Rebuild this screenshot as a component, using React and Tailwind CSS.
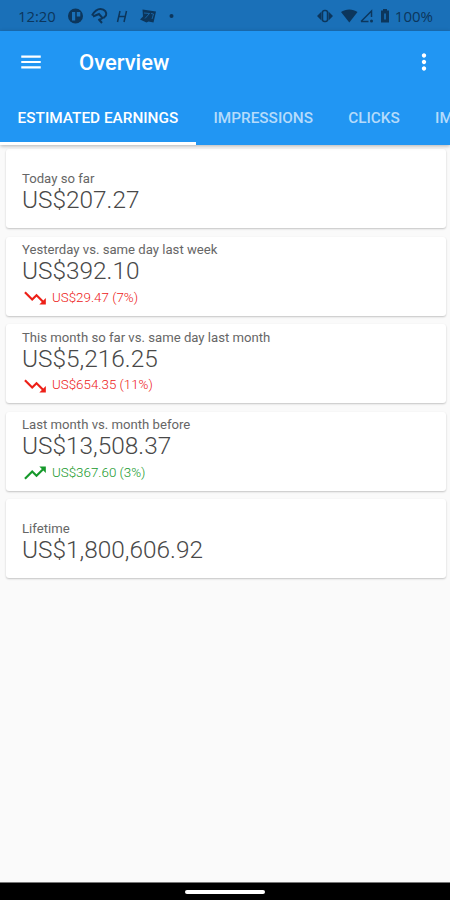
import React, { useState } from 'react';
import { MdMenu, MdMoreVert, MdTrendingDown, MdTrendingUp } from 'react-icons/md';

const tabs = ['ESTIMATED EARNINGS', 'IMPRESSIONS', 'CLICKS', 'IMPRESSION RPM'];

const earnings = [
  { label: 'Today so far', amount: 'US$207.27' },
  { label: 'Yesterday vs. same day last week', amount: 'US$392.10', change: 'US$29.47 (7%)', trend: 'down' },
  { label: 'This month so far vs. same day last month', amount: 'US$5,216.25', change: 'US$654.35 (11%)', trend: 'down' },
  { label: 'Last month vs. month before', amount: 'US$13,508.37', change: 'US$367.60 (3%)', trend: 'up' },
  { label: 'Lifetime', amount: 'US$1,800,606.92' },
];

function StatusBar() {
  return (
    <div className="flex h-[31px] shrink-0 items-center bg-[#1a70b8] pt-px pl-[18px] pr-[17px] text-[#0c365c]">
      <span className="w-[49px] font-['Open_Sans',sans-serif] text-[14.8px]">12:20</span>
      <svg width="108" height="18" viewBox="0 0 108 18" fill="none" stroke="currentColor" strokeWidth="2">
        <circle cx="8.5" cy="9" r="7.5" fill="currentColor" stroke="none" />
        <path d="M5 5h3.2v8.5H5zM9.8 5h3.5v4.500H9.8z" fill="#1a70b8" stroke="none" />
        <path d="M25 8.500c2-3.500 5-6.500 8.500-6.500 4.500 0 6.500 3.500 5.500 6.500l-2.500 2.500M26 9.500l6-2.500 3.500 4-3 2M31.500 12l3.500 4" strokeWidth="2" />
        <path d="M53 4 50.5 15M59.500 4l-2.500 11M51 9.5h8" strokeWidth="1.500" />
        <path d="M75.5 2.5 89 4.5l-2.500 11-5-1-2 1-6.500-3 3-3z" fill="currentColor" stroke="none" />
        <path d="m77 6 5.500.5-4.500 5m6-5 2.500.5-1.500 5" stroke="#1a70b8" strokeWidth="0.8" />
        <circle cx="104.5" cy="9" r="2" fill="currentColor" stroke="none" />
      </svg>
      <svg className="ml-auto" width="74" height="18" viewBox="0 0 74 18" fill="currentColor">
        <path d="M0 9 4.500 4.500v9zM16 9l-4.500-4.500v9z" />
        <rect x="5.5" y="3.5" width="5" height="11" rx="2" fill="none" stroke="currentColor" strokeWidth="1.500" />
        <path d="M24 5c4.500-3.500 12-3.500 16.500 0l-8.200 10.500z" />
        <path d="M44 14.500 54.500 4v6M44 14.500h7.500" fill="none" stroke="currentColor" strokeWidth="1.500" />
        <circle cx="54.500" cy="14" r="1.500" />
        <path d="M66 2h4v1.500h2v12h-8v-12h2z" />
        <path d="M67.200 6.500h1.600v6h-1.600z" fill="#1a70b8" />
      </svg>
      <span className="w-[42px] text-right font-['Open_Sans',sans-serif] text-[15px]">100%</span>
    </div>
  );
}

function EarningsCard({ label, amount, change, trend }) {
  const TrendIcon = trend === 'up' ? MdTrendingUp : MdTrendingDown;

  return (
    <div className={`flex h-[79px] flex-col justify-center rounded-[3px] bg-white pl-[16px] shadow-[0_1px_2px_rgba(0,0,0,0.22)] ${change ? 'pt-px' : 'pt-[7px]'}`}>
      <div className="text-[13.15px] leading-[15px] text-[#666]">{label}</div>
      <div className="text-[24.4px] leading-[28px] font-light text-[#484848]">{amount}</div>
      {change && (
        <div className={`flex h-[26px] items-center ${trend === 'up' ? 'text-[#16992b]' : 'text-[#ed2018]'}`}>
          <TrendIcon size={26} className="mr-[4px]" />
          <span className="text-[13.35px] font-light">{change}</span>
        </div>
      )}
    </div>
  );
}

export default function App() {
  const [activeTab, setActiveTab] = useState(tabs[0]);

  return (
    <div className="flex h-[900px] w-[450px] flex-col overflow-hidden bg-[#fafafa] font-[Roboto,sans-serif]">
      <StatusBar />

      <header className="z-10 h-[114px] shrink-0 overflow-hidden bg-[#2196f3] text-white shadow-[0_1px_4px_rgba(0,0,0,0.3)]">
        <div className="flex h-[62px] items-center pl-[18px] pr-[13px]">
          <button type="button" aria-label="Menu"><MdMenu size={26} /></button>
          <h1 className="ml-[35px] text-[22px] font-medium">Overview</h1>
          <button type="button" aria-label="More options" className="ml-auto"><MdMoreVert size={26} /></button>
        </div>
        <nav className="flex h-[52px]">
          {tabs.map((tab) => (
            <button
              key={tab}
              type="button"
              onClick={() => setActiveTab(tab)}
              className={`shrink-0 border-b-[3px] px-[17.6px] pt-[2px] text-[15.35px] font-medium whitespace-nowrap ${
                activeTab === tab ? 'border-white text-white' : 'border-transparent text-[#b5dbfb]'
              }`}
            >
              {tab}
            </button>
          ))}
        </nav>
      </header>

      <main className="flex flex-1 flex-col gap-[8.5px] pt-[4px] pr-[4px] pl-[6px]">
        {earnings.map((item) => (
          <EarningsCard key={item.label} {...item} />
        ))}
      </main>

      <footer className="flex h-[18px] shrink-0 items-center justify-center border-t border-[#777] bg-black">
        <div className="h-[4px] w-[80px] rounded-full bg-white" />
      </footer>
    </div>
  );
}
